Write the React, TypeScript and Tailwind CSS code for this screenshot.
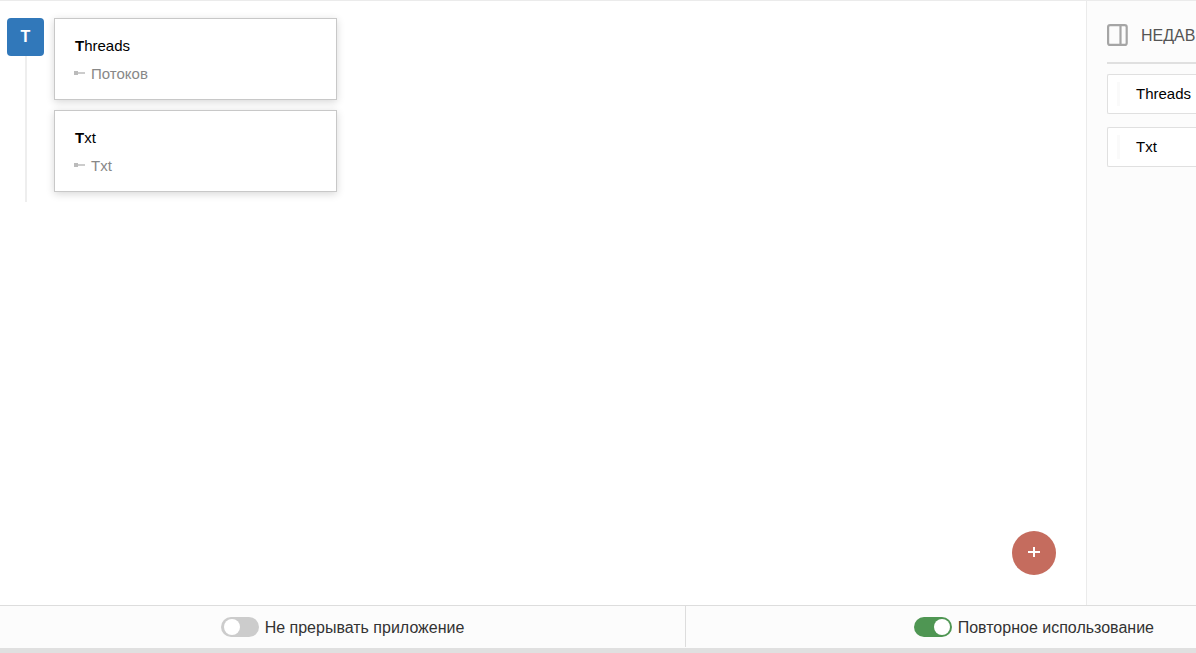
type Entry = { term: string; translation: string };

const entries: Entry[] = [
  { term: "Threads", translation: "Потоков" },
  { term: "Txt", translation: "Txt" },
];

function KeyIcon() {
  return (
    <svg width="12" height="6" viewBox="0 0 12 6" aria-hidden="true" shapeRendering="crispEdges">
      <rect x="0" y="0" width="4" height="4" fill="#bbbbbb" />
      <rect x="4" y="1" width="7" height="2" fill="#cccccc" />
    </svg>
  );
}

function PanelIcon() {
  return (
    <svg width="22" height="22" viewBox="0 0 22 22" fill="none" stroke="#a5a5a5" aria-hidden="true">
      <rect x="1.1" y="1.1" width="18.6" height="19.8" rx="2" strokeWidth="2.2" />
      <path d="M13.5 1v20" strokeWidth="2.2" />
    </svg>
  );
}

function EntryCard({ term, translation }: Entry) {
  return (
    <article className="h-[82px] w-[283px] border border-[#c8c8c8] bg-white px-5 pt-[17px] text-[15px] shadow-[0_2px_8px_rgba(0,0,0,0.16)]">
      <h2 className="leading-5 text-black">
        <b>{term.charAt(0)}</b>
        {term.slice(1)}
      </h2>
      <p className="-ml-px mt-2 flex items-center gap-[5px] leading-5 text-[#888888]">
        <KeyIcon />
        {translation}
      </p>
    </article>
  );
}

function Toggle({ label, on }: { label: string; on?: boolean }) {
  return (
    <label className="flex cursor-pointer items-center gap-[6px] text-base leading-5 whitespace-nowrap text-[#333333]">
      <input
        type="checkbox"
        role="switch"
        defaultChecked={on}
        className="h-5 w-[38px] shrink-0 cursor-pointer appearance-none rounded-full bg-[#cccccc] p-[2px] pl-[3px] before:block before:size-4 before:rounded-full before:bg-white checked:bg-[#4f9653] checked:before:ml-[17px]"
      />
      <span className="pt-[2px]">{label}</span>
    </label>
  );
}

export default function App() {
  return (
    <div
      className="flex h-screen flex-col overflow-hidden bg-white"
      style={{ fontFamily: '"Liberation Sans", Arial, sans-serif' }}
    >
      <div className="flex min-h-0 flex-1 border-t border-[#ebebeb]">
        <main className="relative min-w-0 flex-1 pt-[17px] pl-[7px]">
          <section className="flex items-stretch gap-[10px]">
            <div className="flex w-[37px] flex-col items-center">
              <div className="flex h-[38px] w-full items-center justify-center rounded bg-[#3178ba] text-base font-bold text-white">
                T
              </div>
              <div className="w-[2px] flex-1 bg-[#eeeeee]" />
            </div>
            <div className="flex flex-col gap-[10px] pb-[10px]">
              {entries.map((entry) => (
                <EntryCard key={entry.term} {...entry} />
              ))}
            </div>
          </section>
          <button
            type="button"
            aria-label="+"
            className="absolute right-[30px] bottom-[30px] flex size-11 cursor-pointer items-center justify-center rounded-full bg-[#c56c5e]"
          >
            <svg width="12" height="12" viewBox="0 0 12 12" stroke="#ffffff" strokeWidth="2" aria-hidden="true">
              <path d="M0 5h12M6 0v10" />
            </svg>
          </button>
        </main>

        <aside className="w-[110px] shrink-0 overflow-hidden border-l border-[#ebebeb] bg-[#fcfcfc] pl-5">
          <header className="flex h-[63px] items-center gap-3 border-b-2 border-[#e0e0e0] pt-[7px]">
            <PanelIcon />
            <h1 className="pt-[2px] text-base text-[#555555]">НЕДАВ</h1>
          </header>
          <ul className="mt-[10px] flex flex-col gap-[13px]">
            {entries.map(({ term }) => (
              <li key={term}>
                <button
                  type="button"
                  className="flex h-10 w-full cursor-pointer items-center gap-4 rounded-l-xs border border-r-0 border-[#e0e0e0] bg-white pl-[9px] text-[15px] text-black"
                >
                  <span className="h-6 w-[3px] bg-[#fafafa]" />
                  {term}
                </button>
              </li>
            ))}
          </ul>
        </aside>
      </div>

      <footer className="grid grid-cols-[686fr_510fr] border-t border-b-[5px] border-t-[#dddddd] border-b-[#e0e0e0] bg-[#fcfcfc]">
        <div className="mb-px flex h-[41px] items-center justify-center border-r border-[#dddddd] pt-px">
          <Toggle label="Не прерывать приложение" />
        </div>
        <div className="flex h-[41px] items-center justify-end pt-px pr-[42px]">
          <Toggle label="Повторное использование" on />
        </div>
      </footer>
    </div>
  );
}
